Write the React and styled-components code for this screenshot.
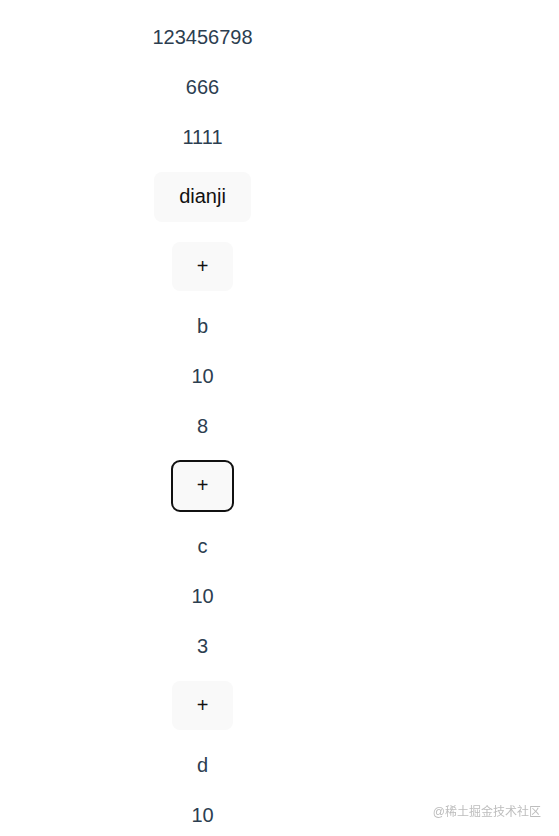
import React from 'react'
import styled, { createGlobalStyle } from 'styled-components'

const Global = createGlobalStyle`
  body {
    margin: 0;
    background: #fff;
    font-family: "Liberation Sans", Arial, Helvetica, sans-serif;
    -webkit-font-smoothing: antialiased;
  }
`

const AppWrap = styled.div`
  width: 389px;
  margin-left: 8px;
  padding-top: 2px;
  text-align: center;
  color: #2c3e50;
  font-size: 20px;
`

const Value = styled.p`
  margin: 20px 0;
  line-height: 30px;
`

const BtnRow = styled.div`
  margin: 20px 0;
`

const Btn = styled.button`
  font-family: inherit;
  font-size: 20px;
  font-weight: 400;
  line-height: 23.5px;
  color: #111;
  background: #f9f9f9;
  border: 1px solid transparent;
  border-radius: 8px;
  padding: 12px 24px;
  cursor: pointer;
  outline: ${p => (p.$focused ? '2px solid #111' : 'none')};
  outline-offset: -1px;
`

const Watermark = styled.div`
  position: fixed;
  right: 18px;
  bottom: 17px;
  font-size: 12px;
  color: #bdbdbd;
  font-family: "Liberation Sans", "Noto Sans CJK SC", sans-serif;
`

const groups = [
  { name: 'b', a: 10, b: 8 },
  { name: 'c', a: 10, b: 3, focused: true },
  { name: 'd', a: 10, b: 1 },
]

export default function App() {
  return (
    <>
      <Global />
      <AppWrap>
        <Value>123456798</Value>
        <Value>666</Value>
        <Value>1111</Value>
        <BtnRow>
          <Btn>dianji</Btn>
        </BtnRow>
        {groups.map(g => (
          <React.Fragment key={g.name}>
            <BtnRow>
              <Btn $focused={g.focused}>+</Btn>
            </BtnRow>
            <Value>{g.name}</Value>
            <Value>{g.a}</Value>
            <Value>{g.b}</Value>
          </React.Fragment>
        ))}
      </AppWrap>
      <Watermark>@稀土掘金技术社区</Watermark>
    </>
  )
}
